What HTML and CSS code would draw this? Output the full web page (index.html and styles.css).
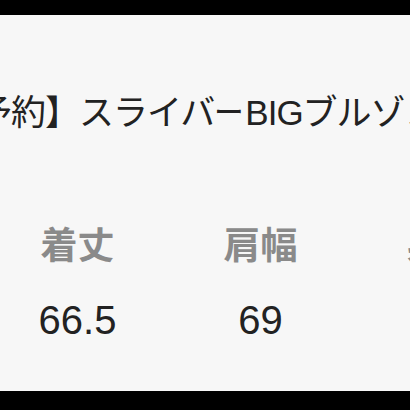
FILE: index.html
```html
<!DOCTYPE html>
<html lang="ja">
<head>
    <meta charset="UTF-8">
    <meta name="viewport" content="width=device-width, initial-scale=1.0">
    <title>スライバーBIGブルゾン</title>
    <link rel="stylesheet" href="styles.css">
</head>
<body>
    <div class="panel">
        <h1 class="title">【予約】スライバ<span class="bar">ー</span>BIGブルゾン</h1>
        <div class="sizes">
            <div class="label">着丈</div>
            <div class="label">肩幅</div>
            <div class="label">身幅</div>
            <div class="value">66.5</div>
            <div class="value">69</div>
            <div class="value">70</div>
        </div>
    </div>
</body>
</html>
```

FILE: styles.css
```css
html, body { margin: 0; padding: 0; background: #000; }
body { width: 410px; height: 410px; overflow: hidden; padding-top: 15px; box-sizing: border-box; font-family: "Liberation Sans", "Noto Sans CJK JP", sans-serif; }
.panel { background: #f7f7f7; height: 376px; padding-top: 78px; box-sizing: border-box; overflow: hidden; }
.title { margin: 0 0 0 -57px; font-size: 35px; line-height: 40px; font-weight: normal; color: #222; white-space: nowrap; letter-spacing: -1px; }
.title .bar { display: inline-block; transform: scaleX(0.85); transform-origin: left center; margin-right: -4px; letter-spacing: 0; }
.sizes { display: grid; grid-template-columns: repeat(3, 183px); margin: 94px 0 0 -14px; text-align: center; }
.label { font-size: 37px; line-height: 40px; font-weight: bold; color: #8a8a8a; }
.value { font-size: 40px; line-height: 44px; color: #222; margin-top: 31px; }
```
